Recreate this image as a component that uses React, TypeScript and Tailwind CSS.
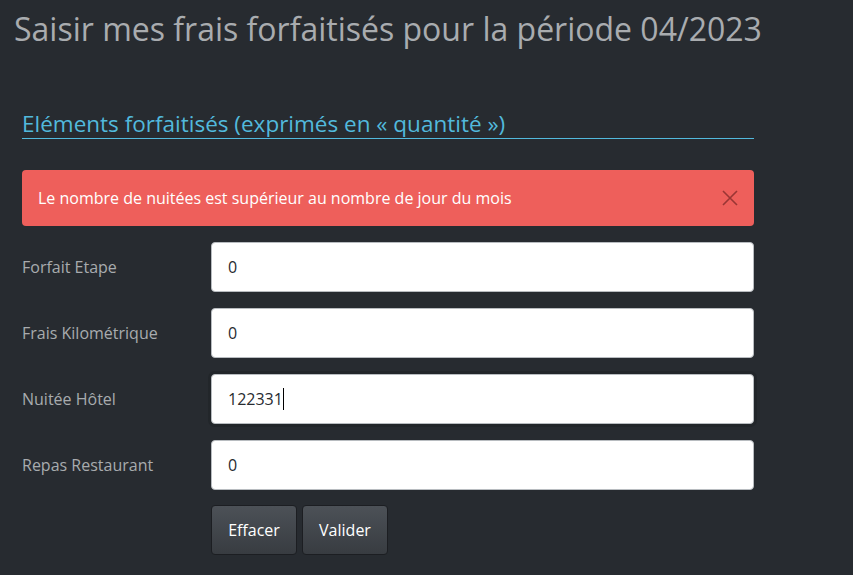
import React from "react";

const rows = [
  { label: "Forfait Etape", value: "0" },
  { label: "Frais Kilométrique", value: "0" },
  { label: "Nuitée Hôtel", value: "122331", focus: true },
  { label: "Repas Restaurant", value: "0" },
];

export default function App() {
  return (
    <div
      className="min-h-[575px] w-full bg-[#272b30] text-[#c8c8c8]"
      style={{ fontFamily: '"Open Sans", "Liberation Sans", sans-serif' }}
    >
      <h2 className="px-[14px] pt-[11px] text-[32px] leading-[35px] text-[#a9acaf]">
        Saisir mes frais forfaitisés pour la période 04/2023
      </h2>
      <div className="ml-[22px] mt-[60px] w-[732px]">
        <div className="border-b border-[#52b9dc] pt-[3px] text-[22.5px] leading-[29px] text-[#52b9dc]">
          Eléments forfaitisés (exprimés en « quantité »)
        </div>
        <div className="mt-[31px] flex h-[56px] items-center justify-between rounded-[4px] bg-[#ee5f5b] pl-[16px] pr-[15px] text-[16px] text-white">
          <span>Le nombre de nuitées est supérieur au nombre de jour du mois</span>
          <svg width="18" height="18" viewBox="0 0 18 18">
            <path d="M2 2 L16 16 M16 2 L2 16" stroke="#9a3634" strokeWidth="1.6" />
          </svg>
        </div>
        <div className="mt-[16px] flex flex-col gap-[16px]">
          {rows.map((r) => (
            <div key={r.label} className="flex items-center">
              <div className="w-[189px] text-[16px] text-[#a8abae]">{r.label}</div>
              <div
                className={
                  "flex h-[50px] flex-1 items-center rounded-[4px] border border-[#b8bcc0] bg-white pl-[16px] text-[16px] text-[#272b30] " +
                  (r.focus ? "shadow-[0_0_0_3px_#22262a]" : "")
                }
              >
                {r.value}
                {r.focus && <span className="inline-block h-[22px] w-[1px] bg-black" />}
              </div>
            </div>
          ))}
        </div>
        <div className="ml-[189px] mt-[15px] flex gap-[5px]">
          <button className="h-[50px] w-[86px] rounded-[4px] border border-[#1c1e22] bg-gradient-to-b from-[#4c5157] to-[#383c41] text-[16px] text-white">
            Effacer
          </button>
          <button className="h-[50px] w-[86px] rounded-[4px] border border-[#1c1e22] bg-gradient-to-b from-[#4c5157] to-[#383c41] text-[16px] text-white">
            Valider
          </button>
        </div>
      </div>
    </div>
  );
}
